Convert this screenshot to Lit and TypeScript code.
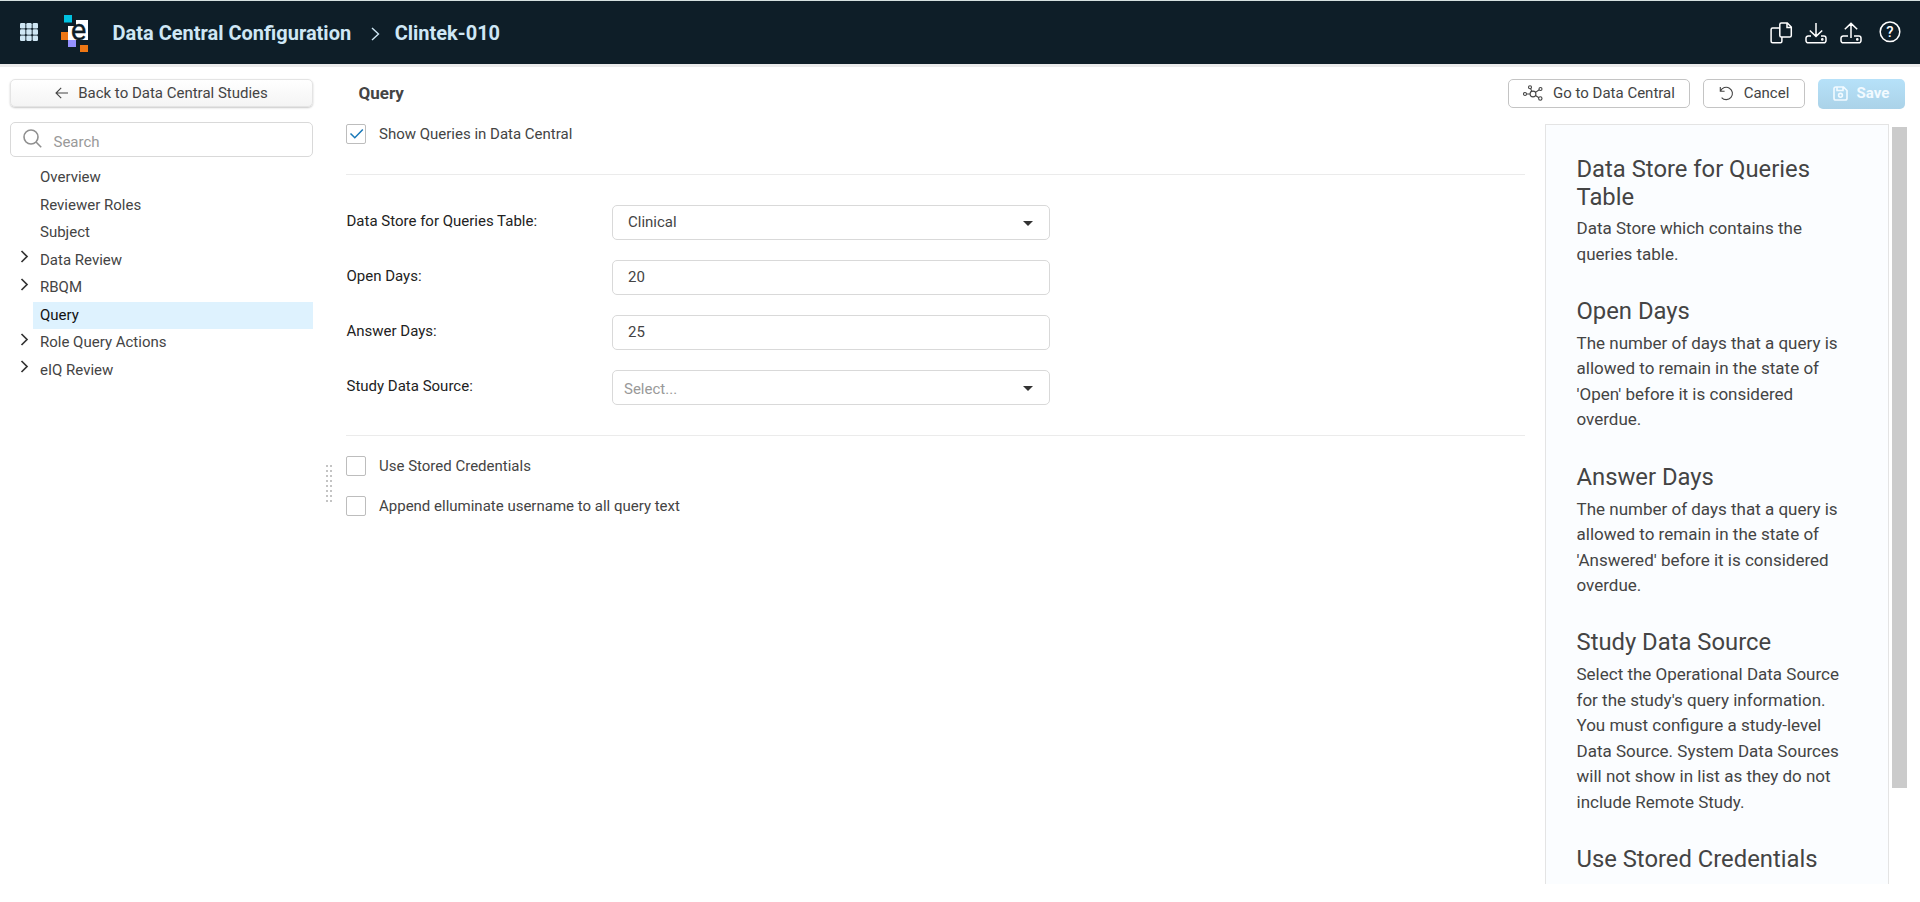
import { LitElement, html, css, svg, nothing } from "lit";
import { customElement } from "lit/decorators.js";
import { classMap } from "lit/directives/class-map.js";

interface NavItem { label: string; expandable?: boolean; active?: boolean }
interface Field { label: string; value?: string; placeholder?: string; select?: boolean }
interface HelpEntry { title: string; text: string }

const NAV: NavItem[] = [
  { label: "Overview" },
  { label: "Reviewer Roles" },
  { label: "Subject" },
  { label: "Data Review", expandable: true },
  { label: "RBQM", expandable: true },
  { label: "Query", active: true },
  { label: "Role Query Actions", expandable: true },
  { label: "eIQ Review", expandable: true },
];

const FIELDS: Field[] = [
  { label: "Data Store for Queries Table:", value: "Clinical", select: true },
  { label: "Open Days:", value: "20" },
  { label: "Answer Days:", value: "25" },
  { label: "Study Data Source:", placeholder: "Select...", select: true },
];

const HELP: HelpEntry[] = [
  { title: "Data Store for Queries Table", text: "Data Store which contains the queries table." },
  { title: "Open Days", text: "The number of days that a query is allowed to remain in the state of 'Open' before it is considered overdue." },
  { title: "Answer Days", text: "The number of days that a query is allowed to remain in the state of 'Answered' before it is considered overdue." },
  { title: "Study Data Source", text: "Select the Operational Data Source for the study's query information. You must configure a study-level Data Source. System Data Sources will not show in list as they do not include Remote Study." },
  { title: "Use Stored Credentials", text: "" },
];

@customElement("app-header")
class AppHeader extends LitElement {
  static styles = css`
    :host { display: block; }
    .bar {
      box-sizing: border-box; height: 64px; border-top: 1px solid #d5e0e0;
      background: #0e1e28; color: #cfe7f5; display: flex; align-items: center;
      padding: 0 19px 0 20px; box-shadow: 0 3px 0 #ebebeb;
      font-weight: 700; font-size: 20px;
    }
    svg { display: block; flex: none; fill: none; overflow: visible; }
    .apps { fill: #cfe7f5; margin-bottom: 2px; }
    .logo { margin: 2px 0 0 22px; }
    .glyph { font-family: Roboto, sans-serif; font-size: 29.5px; font-weight: 400; fill: #0e1e28; stroke: #0e1e28; stroke-width: .3; }
    .product { margin-left: 23.5px; white-space: nowrap; }
    .sep { margin: 2px 14.5px 0 20px; stroke: #cfe7f5; stroke-width: 1.4; }
    .actions { margin-left: auto; display: flex; gap: 13px; stroke: #fff; stroke-width: 1.5; }
    .help { margin-left: 4px; }
    .mark { font-family: Roboto, sans-serif; font-size: 15px; font-weight: 500; fill: #fff; stroke: none; }
  `;
  render() {
    const cells = [0, 1, 2].flatMap((r) => [0, 1, 2].map((c) => svg`<rect x=${c * 6.3} y=${r * 6.3} width="5.4" height="5.4" rx="1.2"/>`));
    return html`
      <header class="bar">
        <svg class="apps" width="18" height="18">${cells}</svg>
        <svg class="logo" width="29" height="38" viewBox="60 15 29 38">
          <rect x="64" y="15" width="8" height="7.5" fill="#00c1e0"/>
          <rect x="61" y="32" width="7" height="8" fill="#ee7714"/>
          <rect x="68" y="26" width="8" height="14" fill="#fff"/>
          <rect x="76" y="20" width="12" height="20" fill="#fff"/>
          <rect x="68" y="40" width="8" height="7" fill="#9691ff"/>
          <rect x="80" y="45" width="8" height="7" fill="#ee7714"/>
          <text class="glyph" x="70.8" y="39.5">e</text>
        </svg>
        <span class="product">Data Central Configuration</span>
        <svg class="sep" width="9" height="14"><path d="M1 1l6.5 6L1 13"/></svg>
        <span>Clintek-010</span>
        <div class="actions">
          <svg width="22" height="22" viewBox="0 0 22 22">
            <path d="M11.3 1h6l4 4v8.5a1.5 1.5 0 0 1-1.5 1.5h-8.5a1.5 1.5 0 0 1-1.5-1.5v-11a1.5 1.5 0 0 1 1.5-1.5zM17 1v4.400h4.200M9.5 6H2.600A1.5 1.5 0 0 0 1.100 7.5v11.800a1.5 1.5 0 0 0 1.5 1.5h7.800a1.5 1.5 0 0 0 1.5-1.5V15"/>
          </svg>
          <svg width="22" height="22" viewBox="0 0 22 22">
            <path d="M11 1v13M4.8 8.5L11 14.4l6.2-5.9M6 14H3.2A2.2 2.2 0 0 0 1 16.2v2.4a2.2 2.2 0 0 0 2.2 2.2h15.6a2.2 2.2 0 0 0 2.2-2.2v-2.4a2.2 2.2 0 0 0-2.2-2.2H16"/>
            <circle cx="17.3" cy="17.4" r=".6"/>
          </svg>
          <svg width="22" height="22" viewBox="0 0 22 22">
            <path d="M11 16V1.5M4.8 7.3L11 1.4l6.2 5.9M8 14H3.2A2.2 2.2 0 0 0 1 16.2v2.4a2.2 2.2 0 0 0 2.2 2.2h15.6a2.2 2.2 0 0 0 2.2-2.2v-2.4a2.2 2.2 0 0 0-2.2-2.2H14"/>
            <circle cx="17.3" cy="17.4" r=".6"/>
          </svg>
          <svg class="help" width="22" height="22" viewBox="0 0 22 22">
            <circle cx="11" cy="9.8" r="9.8"/><text class="mark" x="7.3" y="15">?</text>
          </svg>
        </div>
      </header>`;
  }
}

@customElement("side-nav")
class SideNav extends LitElement {
  static styles = css`
    :host { display: block; width: 303px; flex: none; color: #444; }
    .back {
      box-sizing: border-box; width: 100%; height: 28px; display: flex; align-items: center; justify-content: center; gap: 10px;
      border: 1px solid #e4e4e4; border-radius: 5px; background: linear-gradient(#fff, #f4f4f4);
      box-shadow: 0 1px 2px rgba(0, 0, 0, .22); font: inherit; color: inherit; padding: 0;
    }
    svg { display: block; flex: none; fill: none; }
    .arrow { stroke: #444; stroke-width: 1.1; }
    .search {
      box-sizing: border-box; height: 35px; margin-top: 15px; display: flex; align-items: center;
      border: 1px solid #d9d9d9; border-radius: 5px; padding-left: 12px; color: #999;
    }
    .search svg { stroke: #8f8f8f; stroke-width: 1.6; margin-bottom: 2px; }
    .search span { margin: 4px 0 0 11.5px; }
    .tree { margin: 7px 0 0; padding: 0; list-style: none; }
    .row { display: flex; height: 27.5px; align-items: center; }
    .twist { width: 23px; display: flex; }
    .twist svg { margin: 0 0 7px 10px; stroke: #333; stroke-width: 1.7; }
    .label { flex: 1; line-height: 27px; padding-left: 7px; }
    .active .label { background: #def2fe; color: #111; }
  `;
  render() {
    return html`
      <button class="back">
        <svg class="arrow" width="13" height="12"><path d="M13 6H1M6.2 .8L1 6l5.2 5.2"/></svg>
        <span>Back to Data Central Studies</span>
      </button>
      <div class="search">
        <svg width="19" height="19"><circle cx="8" cy="8" r="7"/><path d="M13 13l5.2 5.2"/></svg>
        <span>Search</span>
      </div>
      <ul class="tree">
        ${NAV.map((n) => html`
          <li class=${classMap({ row: true, active: !!n.active })}>
            <span class="twist">${n.expandable ? html`<svg width="9" height="13"><path d="M1.5 1l5.5 5.5L1.5 12"/></svg>` : nothing}</span>
            <span class="label">${n.label}</span>
          </li>`)}
      </ul>`;
  }
}

@customElement("query-form")
class QueryForm extends LitElement {
  static styles = css`
    :host { display: block; width: 1179px; flex: none; color: #444; }
    .check { display: flex; align-items: center; height: 20px; gap: 13px; }
    .check span { margin-top: -1px; }
    .box { box-sizing: border-box; width: 20px; height: 20px; border: 1px solid #bdbdbd; border-radius: 2px; }
    .box svg { display: block; fill: none; stroke: #1878b8; stroke-width: 1.5; }
    .group { border-top: 1px solid #ebebeb; border-bottom: 1px solid #ebebeb; margin: 30px 0 20px; padding: 30px 0; display: grid; gap: 20px; }
    .field { display: flex; height: 35px; }
    .name { width: 265.5px; padding-left: .5px; line-height: 32px; color: #222; }
    .input {
      box-sizing: border-box; width: 438px; border: 1px solid #d9d9d9; border-radius: 5px;
      display: flex; justify-content: space-between; padding: 0 16px 0 15px; line-height: 32px;
    }
    .empty { color: #999; padding-left: 11px; line-height: 36px; }
    .caret { align-self: center; margin-top: 2px; border: 5px solid transparent; border-top-color: #333; border-bottom: 0; }
    .last { margin-top: 20px; }
  `;
  check(label: string, on = false, last = false) {
    return html`<div class=${classMap({ check: true, last })}>
      <div class="box">${on ? html`<svg width="18" height="18"><path d="M3.5 8.5l4.3 4.3 8-8.3"/></svg>` : nothing}</div>
      <span>${label}</span></div>`;
  }
  render() {
    return html`
      ${this.check("Show Queries in Data Central", true)}
      <div class="group">
        ${FIELDS.map((f) => html`
          <div class="field">
            <div class="name">${f.label}</div>
            <div class=${classMap({ input: true, empty: !f.value })}>
              <span>${f.value ?? f.placeholder}</span>${f.select ? html`<i class="caret"></i>` : nothing}
            </div>
          </div>`)}
      </div>
      ${this.check("Use Stored Credentials")}
      ${this.check("Append elluminate username to all query text", false, true)}`;
  }
}

@customElement("help-panel")
class HelpPanel extends LitElement {
  static styles = css`
    :host { display: flex; gap: 3px; flex: none; color: #444; }
    .panel {
      box-sizing: border-box; width: 344px; height: 760px; overflow: hidden; padding: 31px 31px 0 30.5px;
      border: 1px solid #e4e4e4; border-bottom: 0; background: #fbfdff;
    }
    h2 { margin: 0 0 5.2px; font-size: 23.8px; font-weight: 400; line-height: 27.6px; }
    p { margin: 0 0 30.8px; font-size: 17px; line-height: 25.5px; }
    .thumb { width: 15px; height: 661px; margin-top: 3px; background: #cbcbcb; }
  `;
  render() {
    return html`
      <aside class="panel">${HELP.map((h) => html`<h2>${h.title}</h2><p>${h.text}</p>`)}</aside>
      <div class="thumb"></div>`;
  }
}

@customElement("app-root")
class AppRoot extends LitElement {
  static styles = css`
    :host { display: block; height: 902px; overflow: hidden; background: #fff; font: 15px Roboto, sans-serif; color: #444; }
    .page { display: flex; padding: 15px 13px 0 10px; }
    .split { width: 33px; display: flex; justify-content: flex-start; padding: 386px 0 0 13px; box-sizing: border-box; }
    .dots { display: grid; grid-template-columns: 2px 2px; grid-auto-rows: 2px; gap: 3px 2px; height: 38px; }
    .dots i { background: #c4c4c4; }
    .content { flex: 1; }
    .top { display: flex; height: 30px; align-items: flex-start; }
    h1 { margin: 0; font-size: 17px; font-weight: 700; line-height: 29px; padding-left: 12.5px; flex: 1; }
    .btn {
      box-sizing: border-box; height: 29px; display: flex; align-items: center; margin: 0 0 0 13px; padding: 0 0 1px;
      justify-content: center; gap: 10px; border: 1px solid #c4c4c4; border-radius: 5px; background: #fff; font: inherit; color: #444;
    }
    .btn svg { display: block; fill: none; stroke: #444; stroke-width: 1.1; }
    .go { width: 182px; }
    .cancel { width: 102px; }
    .top .save { width: 87px; height: 30px; border: 0; background: linear-gradient(#b6e1f9, #abd2e8); color: #f2faff; font-weight: 700; gap: 9px; padding: 0 1px 2px 0; margin-right: 2px; }
    .save svg { stroke: #f2faff; stroke-width: 1.6; }
    .body { display: flex; justify-content: space-between; padding-top: 15px; }
  `;
  render() {
    return html`
      <app-header></app-header>
      <div class="page">
        <side-nav></side-nav>
        <div class="split"><div class="dots">${Array.from({ length: 16 }, () => html`<i></i>`)}</div></div>
        <main class="content">
          <div class="top">
            <h1>Query</h1>
            <button class="btn go">
              <svg width="20" height="16" viewBox="0 0 20 16">
                <circle cx="2" cy="9" r="1.5"/><circle cx="7" cy="2.2" r="1.5"/><circle cx="17.5" cy="4" r="1.5"/><circle cx="17.3" cy="13.5" r="1.7"/>
                <circle cx="10" cy="9" r="2.9"/><path d="M3.5 9H7M7.6 3.6l1.2 2.7M16.2 4.8l-3.7 2.6M12.5 10.5l3.4 2.2"/>
              </svg><span>Go to Data Central</span>
            </button>
            <button class="btn cancel">
              <svg width="15" height="15" viewBox="0 0 15 15"><path d="M1.3 1v4.3h4.3M1.5 5.1A6.2 6.2 0 1 1 2.6 11.6"/></svg><span>Cancel</span>
            </button>
            <button class="btn save">
              <svg width="15" height="15" viewBox="0 0 15 15"><path d="M2.8 1h7.7L14 4.5v7.7a1.8 1.8 0 0 1-1.8 1.8H2.8A1.8 1.8 0 0 1 1 12.2V2.8A1.8 1.8 0 0 1 2.8 1zM4 1v3.5h6V1"/><circle cx="7.5" cy="9.3" r="1.9"/></svg><span>Save</span>
            </button>
          </div>
          <div class="body"><query-form></query-form><help-panel></help-panel></div>
        </main>
      </div>`;
  }
}
